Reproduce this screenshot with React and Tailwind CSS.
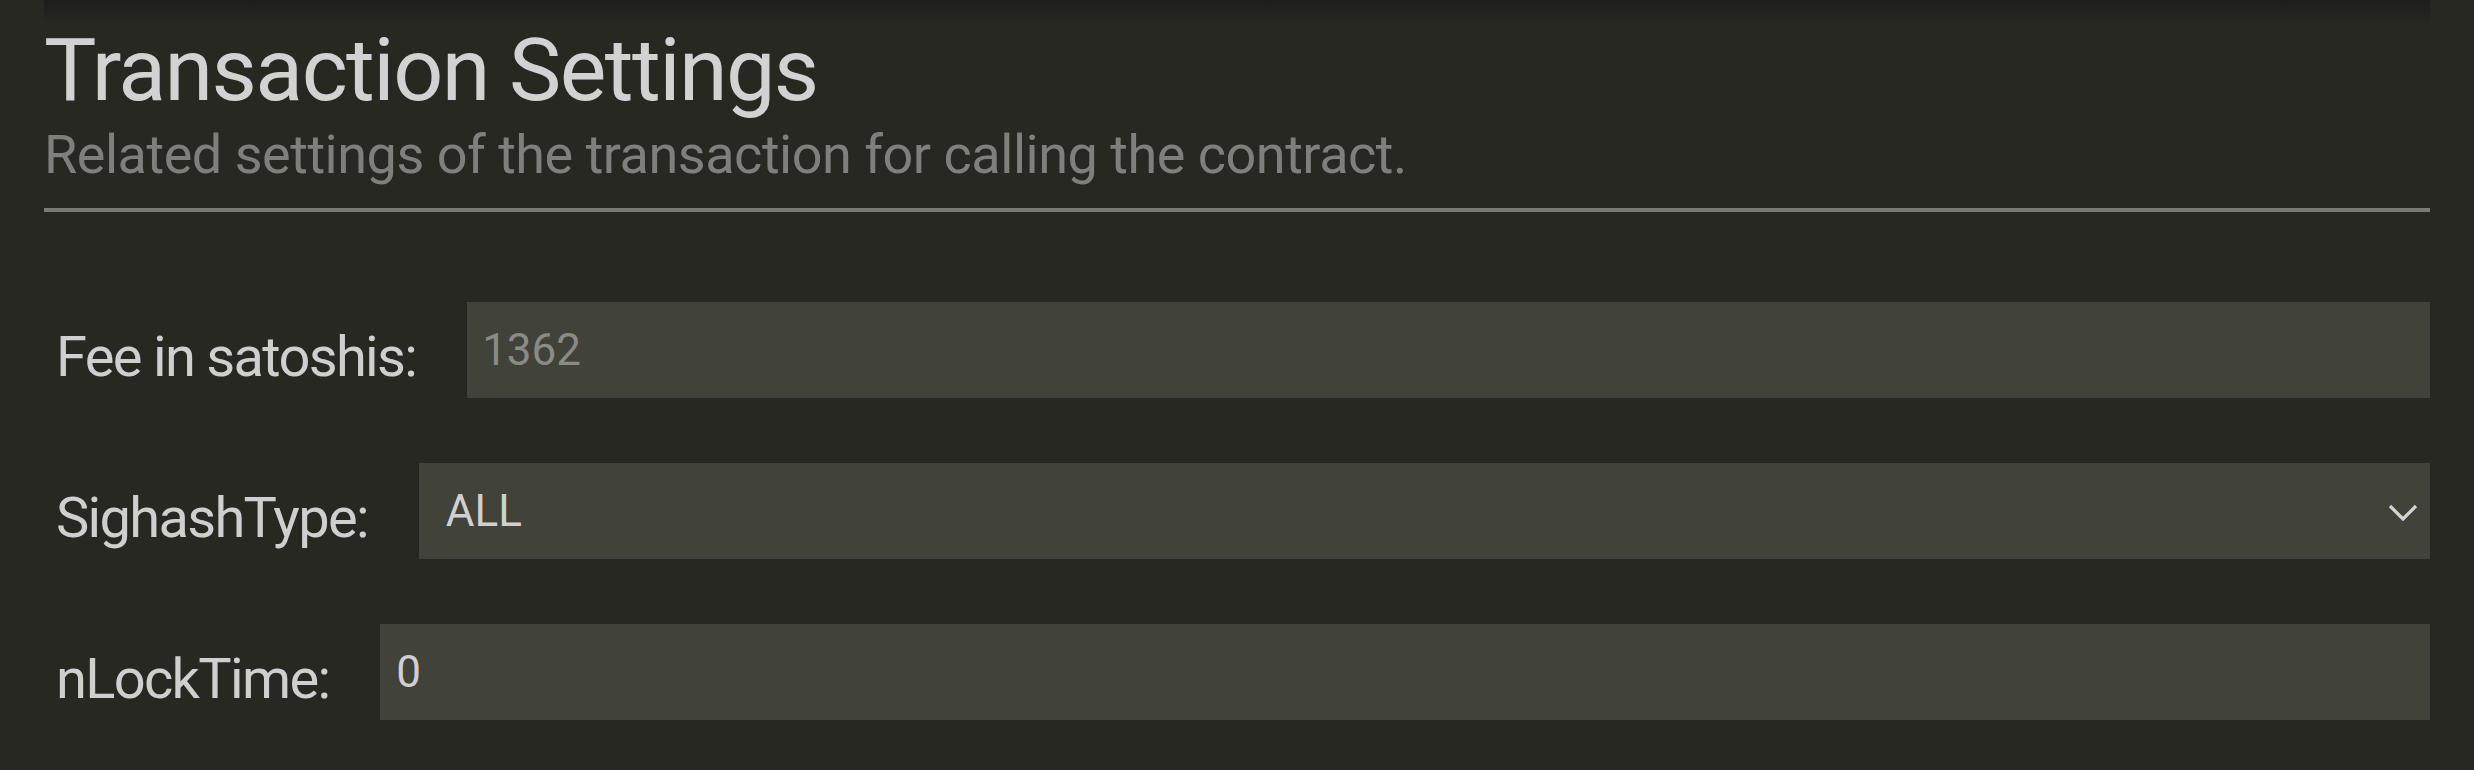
import React from 'react';

function Row({ label, children }) {
  return (
    <div className="flex items-center gap-[51px]">
      <label className="pt-[14px] text-[56px] leading-none tracking-[-0.03em] text-[#cfcfcf] whitespace-nowrap">{label}</label>
      <div className="flex-1">{children}</div>
    </div>
  );
}

export default function App() {
  return (
    <div className="min-h-screen bg-[#272822] font-['Roboto',sans-serif]">
      {/* shadow from the bar above */}
      <div className="mx-[44px] h-[26px] bg-gradient-to-b from-[#1d1e1a] to-[#272822]" />
      <div className="px-[44px]">
        <h1 className="text-[88px] leading-none tracking-[-0.018em] text-[#d2d2d2]">Transaction Settings</h1>
        <p className="mt-[14px] text-[54px] leading-none tracking-[-0.009em] text-[#7f7f7c]">
          Related settings of the transaction for calling the contract.
        </p>
        <div className="mt-[26px] h-[4px] bg-[#7a7a77]" />

        <div className="mt-[90px] pl-[12px] flex flex-col gap-[65px]">
          <Row label="Fee in satoshis:">
            <input
              type="text"
              placeholder="1362"
              className="w-full h-[96px] bg-[#41423a] px-[15px] text-[44px] text-[#d0d0d0] placeholder:text-[#8a8a86] outline-none"
            />
          </Row>
          <Row label="SighashType:">
            <div className="relative">
              <select
                defaultValue="ALL"
                className="w-full h-[96px] appearance-none bg-[#41423a] px-[27px] text-[44px] text-[#d0d0d0] outline-none"
              >
                <option>ALL</option>
                <option>NONE</option>
                <option>SINGLE</option>
              </select>
              <svg
                className="pointer-events-none absolute right-[12px] top-[41px]"
                width="30"
                height="17"
                viewBox="0 0 30 17"
                fill="none"
                stroke="#d4d4d4"
                strokeWidth="3.2"
              >
                <path d="M2 2 L15 15 L28 2" />
              </svg>
            </div>
          </Row>
          <Row label="nLockTime:">
            <input
              type="text"
              defaultValue="0"
              className="w-full h-[96px] bg-[#41423a] px-[16px] text-[44px] text-[#d0d0d0] outline-none"
            />
          </Row>
        </div>
      </div>
    </div>
  );
}
